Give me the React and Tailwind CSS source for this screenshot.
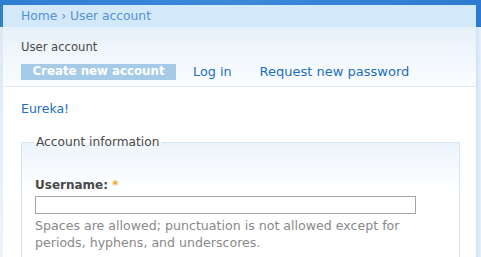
import React from 'react';

const App = () => {
  return (
    <div className="h-[257px] w-[481px] overflow-hidden bg-white font-['DejaVu_Sans',Verdana,sans-serif]">
      {/* Header band */}
      <div className="h-[27px] bg-gradient-to-r from-[#2f7fd1] via-[#3a8ad8] to-[#2c7bd0] pt-[5px] pl-[3px] pr-[5px]">
        <div className="flex h-[22px] items-center bg-[#d3e8f8] pl-[18px]">
          <span className="text-[12.3px] text-[#5592d6]">Home › User account</span>
        </div>
      </div>

      <div className="flex">
        {/* Left strip */}
        <div className="w-[3px] bg-gradient-to-b from-[#dde9f5] to-[#eef4fa]" />

        {/* Main content */}
        <div className="flex-1">
          <div className="bg-gradient-to-b from-[#e7f1f9] to-[#fbfdff] pl-[18px] pr-4 pt-[11px]">
            <h1 className="text-[11.6px] leading-[18px] text-[#494949]">User account</h1>
            <div className="mt-[8px] flex h-[16px] items-center">
              <span className="flex h-[16px] w-[155px] items-center justify-center bg-[#a5cbe8] text-[11.8px] font-bold text-white">
                Create new account
              </span>
              <a className="ml-[17px] text-[12.8px] text-[#1a6fc0]">Log in</a>
              <a className="ml-[28px] text-[13px] text-[#1a6fc0]">Request new password</a>
            </div>
            <div className="h-[6px]" />
          </div>
          <div className="h-px bg-[#e2e8ee]" />

          <div className="pl-[18px] pr-4">
            <p className="mt-[13px] text-[12.5px] leading-[18px] text-[#1a6fc0]">Eureka!</p>

            <fieldset className="mt-[17px] border border-[#d4e5f3] bg-gradient-to-b from-[#ecf4fb] to-white to-[40%] pl-[13px] pr-4 pb-4">
              <legend className="ml-[-1px] px-[2px] text-[12.2px] leading-[14px] text-[#494949]">Account information</legend>
              <div className="mt-[28px]">
                <label className="block text-[12px] font-bold leading-[16px] text-[#494949]">
                  Username: <span className="text-[#f5a623]">*</span>
                </label>
                <input className="mt-[3px] block h-[18px] w-[381px] border border-[#a6a6a6] bg-white" />
                <p className="mt-[3px] text-[12.6px] leading-[17px] text-[#898989]">
                  Spaces are allowed; punctuation is not allowed except for
                  <br />
                  periods, hyphens, and underscores.
                </p>
              </div>
            </fieldset>
          </div>
        </div>

        {/* Right strip */}
        <div className="w-[5px] bg-gradient-to-r from-[#cfe2f4] to-[#e6f0fa]" />
      </div>
    </div>
  );
};

export default App;
